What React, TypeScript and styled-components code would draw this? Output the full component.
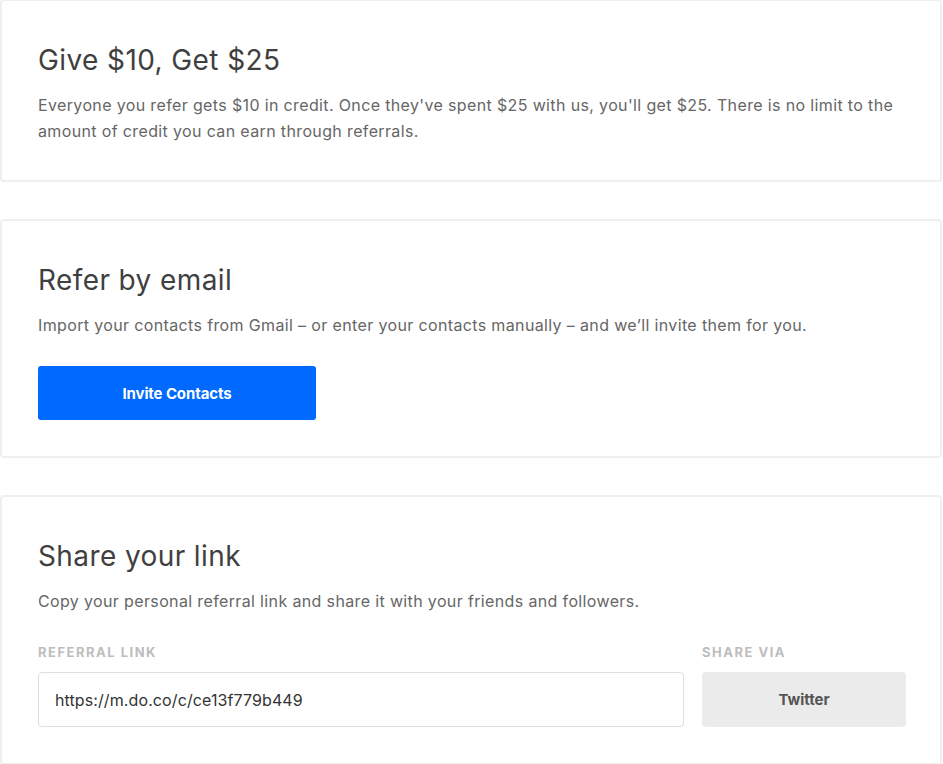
import React from "react";
import styled, { createGlobalStyle } from "styled-components";

const GlobalStyle = createGlobalStyle`
  html, body { margin: 0; padding: 0; background: #fff; }
  body {
    font-family: Inter, "Noto Sans", "Liberation Sans", sans-serif;
    -webkit-font-smoothing: antialiased;
  }
  * { box-sizing: border-box; }
`;

const Page = styled.div`
  width: 942px;
  display: flex;
  flex-direction: column;
  gap: 37px;
  margin-top: -1px;
`;

const Card = styled.section`
  border: 2px solid #efefef;
  border-radius: 4px;
  background: #fff;
  padding: 42px 34px 36px 36px;
`;

const Title = styled.h2`
  margin: 0;
  font-size: 28px;
  line-height: 34px;
  font-weight: 400;
  letter-spacing: 0.4px;
  color: #3f3f3f;
`;

const Text = styled.p`
  margin: 15px 0 0;
  font-size: 16px;
  line-height: 26px;
  letter-spacing: 0.36px;
  color: #666;
`;

const PrimaryButton = styled.button`
  display: block;
  margin-top: 28px;
  width: 278px;
  height: 54px;
  border: none;
  border-radius: 3px;
  background: #0069ff;
  color: #fff;
  font-family: inherit;
  font-size: 15px;
  font-weight: 700;
  letter-spacing: -0.1px;
  cursor: pointer;
`;

const ShareGrid = styled.div`
  margin-top: 30px;
  display: grid;
  grid-template-columns: 1fr 204px;
  column-gap: 18px;
  row-gap: 12px;
`;

const Label = styled.div`
  font-size: 13px;
  line-height: 16px;
  font-weight: 700;
  letter-spacing: 1.5px;
  text-transform: uppercase;
  color: #bdbdbd;
`;

const LinkInput = styled.input`
  height: 55px;
  width: 100%;
  border: 1px solid #dfdfdf;
  border-radius: 4px;
  padding: 0 16px;
  font-family: inherit;
  font-size: 16px;
  letter-spacing: 0.1px;
  color: #333;
  outline: none;
  background: #fff;
`;

const SecondaryButton = styled.button`
  height: 55px;
  border: none;
  border-radius: 4px;
  background: #ebebeb;
  color: #555;
  font-family: inherit;
  font-size: 15px;
  font-weight: 700;
  cursor: pointer;
`;

export default function App() {
  return (
    <>
      <GlobalStyle />
      <Page>
        <Card>
          <Title>Give $10, Get $25</Title>
          <Text>
            Everyone you refer gets $10 in credit. Once they've spent $25 with us, you'll get $25. There is no limit to the
            amount of credit you can earn through referrals.
          </Text>
        </Card>
        <Card>
          <Title>Refer by email</Title>
          <Text>Import your contacts from Gmail – or enter your contacts manually – and we’ll invite them for you.</Text>
          <PrimaryButton>Invite Contacts</PrimaryButton>
        </Card>
        <Card>
          <Title>Share your link</Title>
          <Text>Copy your personal referral link and share it with your friends and followers.</Text>
          <ShareGrid>
            <Label>Referral link</Label>
            <Label>Share via</Label>
            <LinkInput readOnly value="https://m.do.co/c/ce13f779b449" />
            <SecondaryButton>Twitter</SecondaryButton>
          </ShareGrid>
        </Card>
      </Page>
    </>
  );
}
